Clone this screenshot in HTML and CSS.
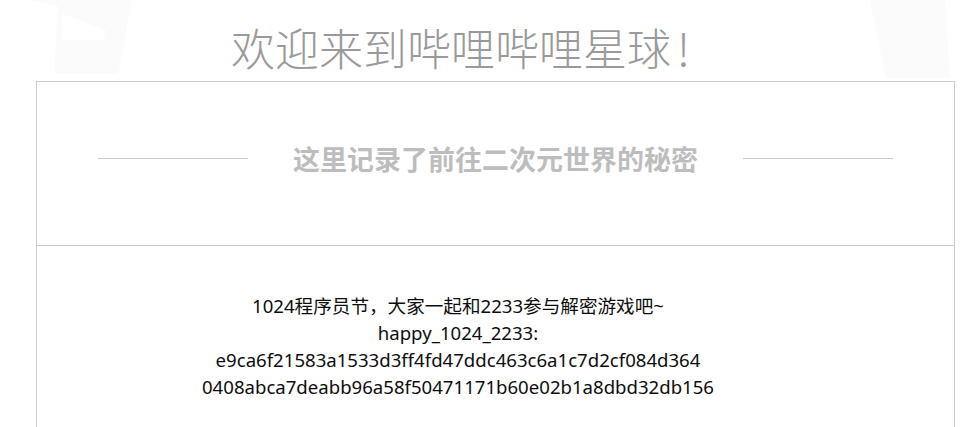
FILE: index.html
```html
<!DOCTYPE html>
<html lang="zh-CN">
<head>
<meta charset="utf-8">
<title>欢迎来到哔哩哔哩星球!</title>
<link rel="stylesheet" href="styles.css">
</head>
<body>
<div class="decor" aria-hidden="true">
  <svg class="decor-svg" width="962" height="90" viewBox="0 0 962 90">
    <polygon points="28,0 132,0 118,74 54,74 58,6" fill="#fbfbfb"/>
    <polygon points="62,14 106,30 104,40 62,40" fill="#ffffff"/>
    <polygon points="870,0 945,0 950,78 886,78" fill="#fbfbfb"/>
  </svg>
</div>
<main class="page">
  <h1 class="title">欢迎来到哔哩哔哩星球<span class="bang">!</span></h1>
  <section class="box">
    <div class="head">
      <span class="rule"></span>
      <h2 class="subtitle">这里记录了前往二次元世界的秘密</h2>
      <span class="rule"></span>
    </div>
    <div class="content">
      <p class="line">1024程序员节，大家一起和2233参与解密游戏吧~</p>
      <p class="line">happy_1024_2233:</p>
      <p class="line">e9ca6f21583a1533d3ff4fd47ddc463c6a1c7d2cf084d364</p>
      <p class="line">0408abca7deabb96a58f50471171b60e02b1a8dbd32db156</p>
    </div>
  </section>
</main>
</body>
</html>
```
FILE: styles.css
```css
html, body {
  margin: 0;
  padding: 0;
  background: #ffffff;
  overflow: hidden;
  height: 427px;
}

body {
  font-family: "Noto Sans", "Noto Sans CJK SC", sans-serif;
  position: relative;
}

.decor {
  position: absolute;
  left: 0;
  top: 0;
  z-index: 0;
}

.decor-svg {
  display: block;
}

.page {
  position: relative;
  z-index: 1;
}

.title {
  margin: 0;
  height: 81px;
  box-sizing: border-box;
  padding: 21px 0 0 231px;
  font-family: "Noto Sans CJK SC", sans-serif;
  font-weight: 300;
  font-size: 44px;
  line-height: 52px;
  color: #9a9a9a;
  white-space: nowrap;
}

.bang {
  margin-left: 6px;
}

.box {
  margin: 0 7px 0 36px;
  border: 1px solid #cccccc;
  border-bottom: none;
  background: #ffffff;
  height: 345px;
}

.head {
  height: 153px;
  padding-bottom: 10px;
  border-bottom: 1px solid #cccccc;
  display: flex;
  align-items: center;
  justify-content: center;
  gap: 45px;
}

.rule {
  width: 150px;
  height: 1px;
  background: #cccccc;
}

.subtitle {
  margin: 0;
  font-family: "Noto Sans CJK SC", sans-serif;
  font-weight: 700;
  font-size: 27px;
  line-height: 32px;
  color: #bdbdbd;
  white-space: nowrap;
}

.content {
  padding: 46px 75px 0 0;
  text-align: center;
  color: #0d0d0d;
  font-size: 18.6px;
  line-height: 27px;
}

.line {
  margin: 0;
  white-space: nowrap;
}
```
